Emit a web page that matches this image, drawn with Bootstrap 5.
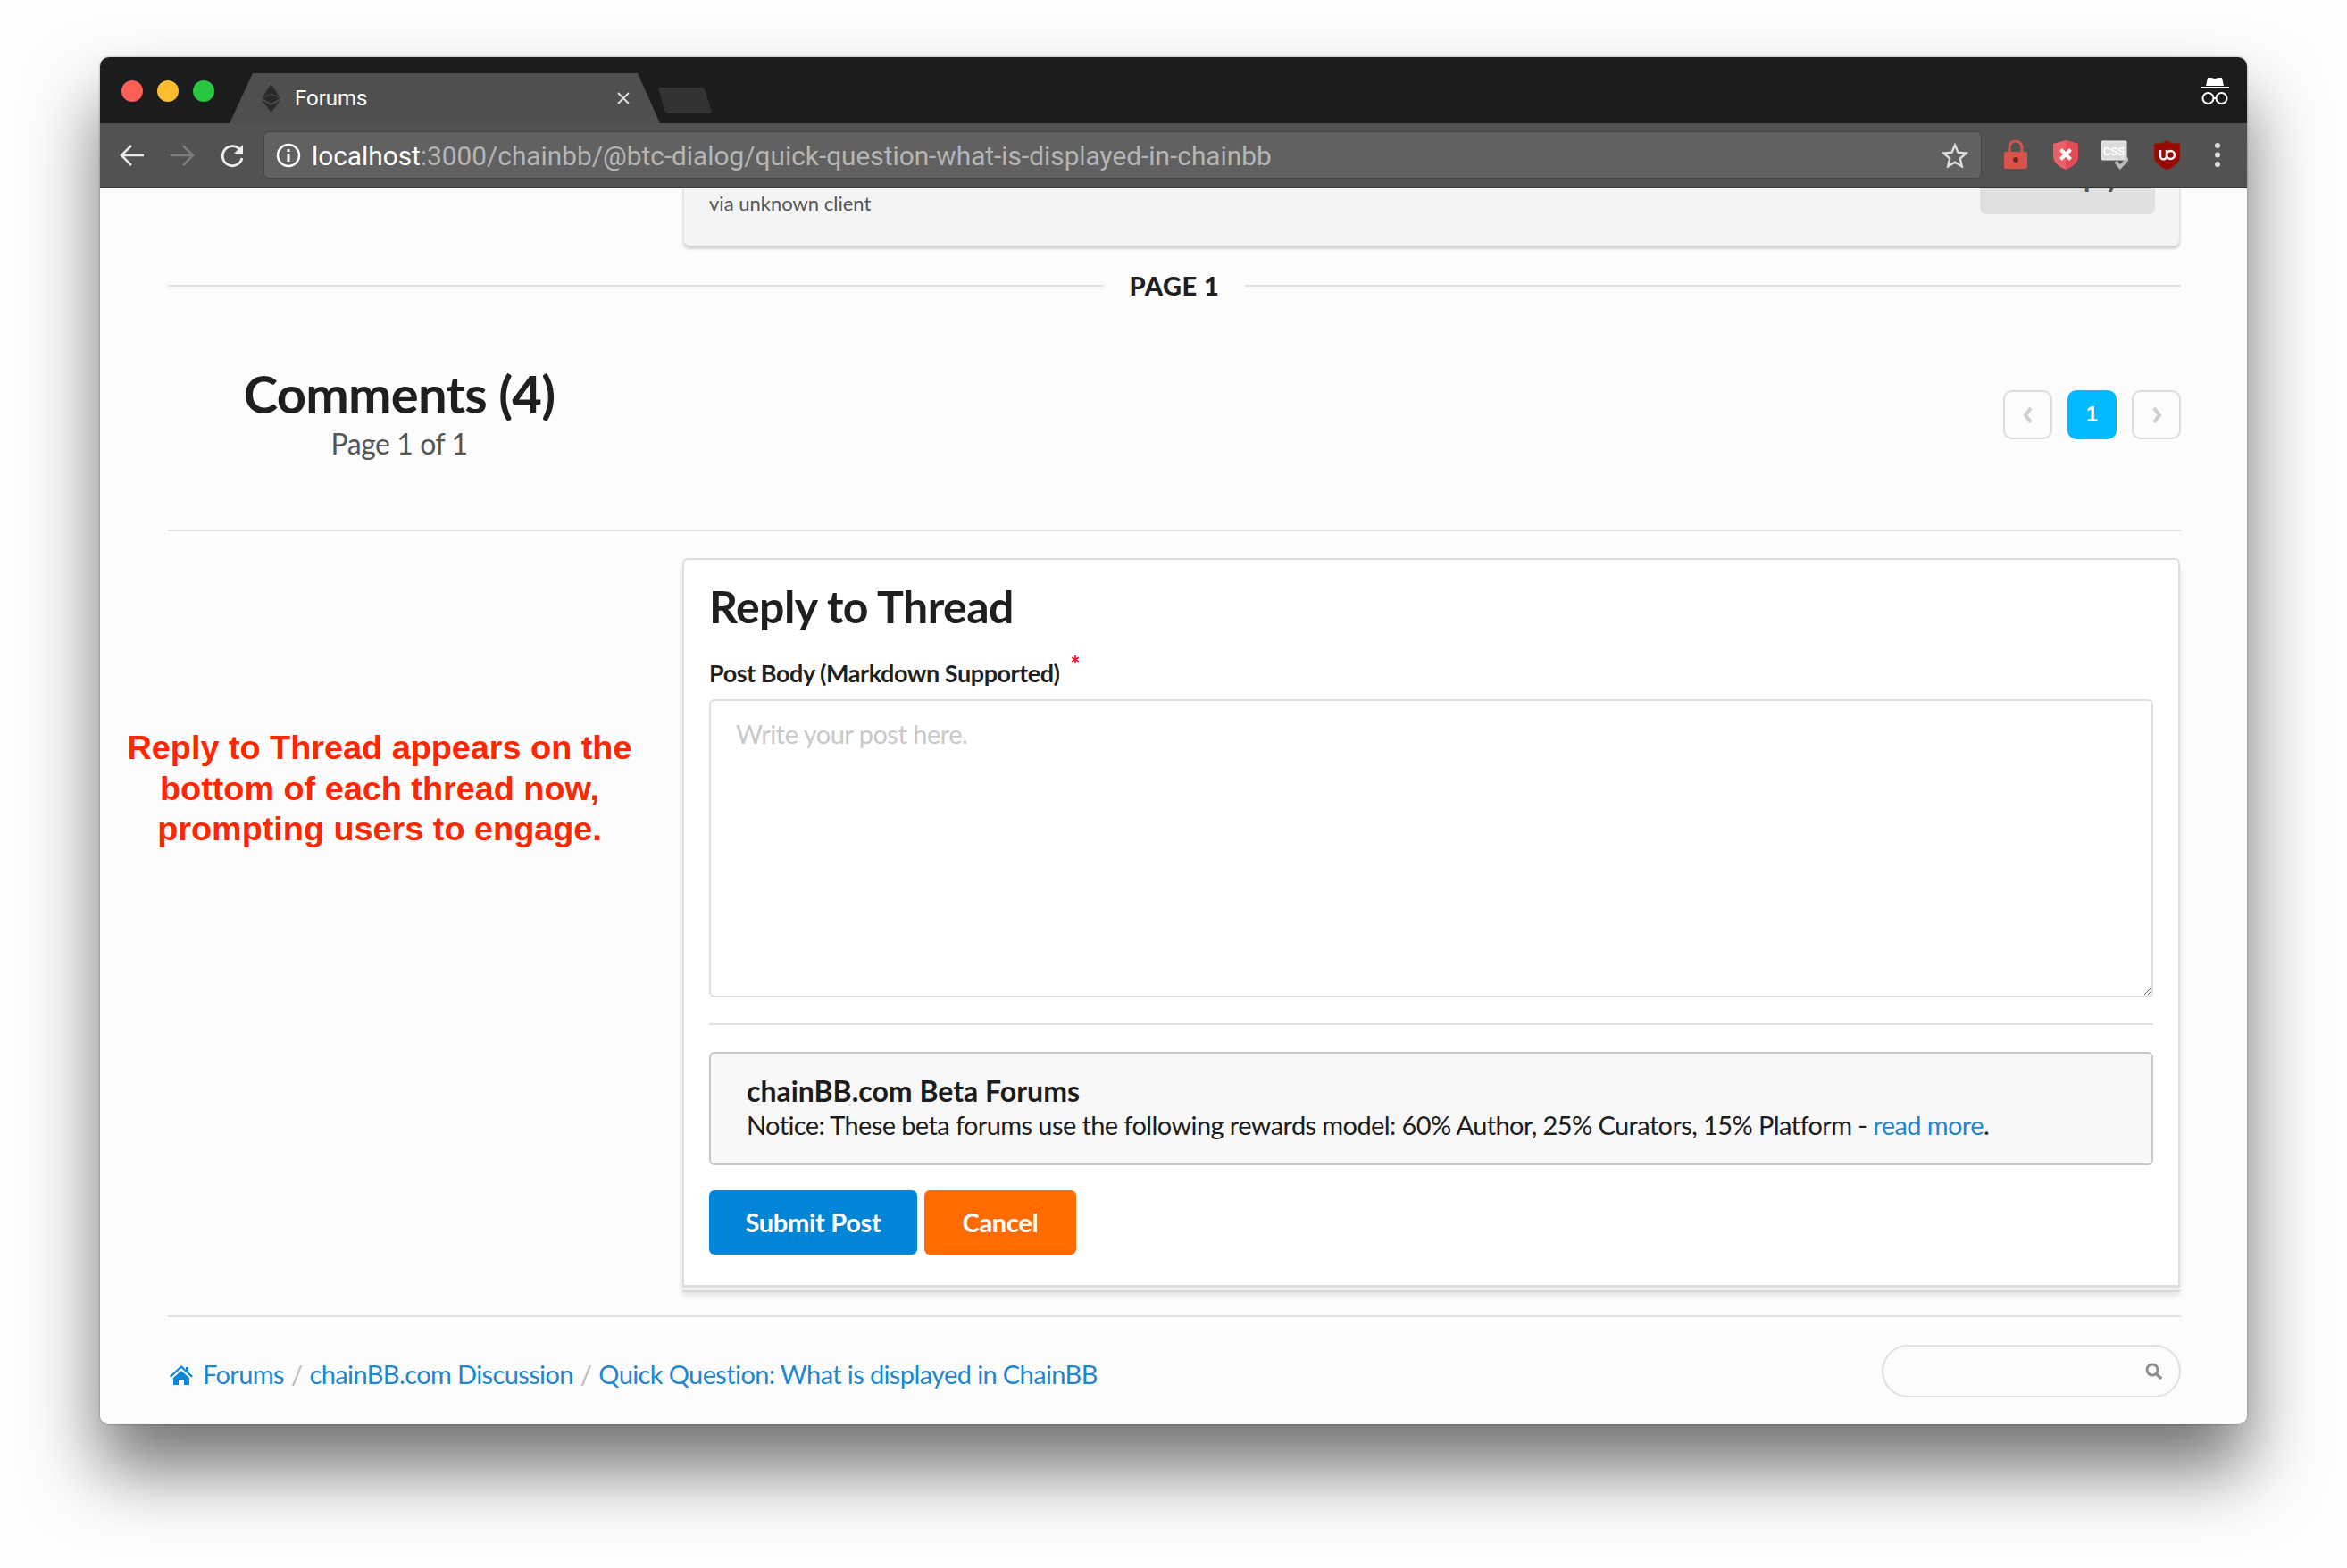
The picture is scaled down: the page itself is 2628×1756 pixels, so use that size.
<!DOCTYPE html>
<html lang="en">
  <head>
    <meta charset="UTF-8" />
    <meta name="viewport" content="width=device-width, initial-scale=1.0" />
    <title>Forums</title>
    <link href="https://cdn.jsdelivr.net/npm/bootstrap@5.3.3/dist/css/bootstrap.min.css" rel="stylesheet" />
    <style>
      body { background: #fdfdfd; font-family: Lato, "Liberation Sans", sans-serif; color: #1f1f1f; padding: 64px 0 0 112px; height: 1756px; overflow: hidden; }
      .win { width: 2404px; height: 1531px; border-radius: 10px; overflow: hidden; background: #fcfcfc; }
      .win-shadow { width: 2404px; border-radius: 10px; box-shadow: 0 50px 80px rgba(0,0,0,.55), 0 0 2px rgba(0,0,0,.5); }

      .tabstrip { height: 74px; background: #1b1c1e; }
      .lights { padding-left: 24px; gap: 16px; padding-top: 26px; height: 74px; }
      .light { width: 24px; height: 24px; border-radius: 50%; }
      .tab-shape { width: 482px; height: 56px; margin: 18px 0 0 17px; background: #4f4f4f; color: #fff; font-family: Roboto, sans-serif; font-size: 24px; clip-path: polygon(0 100%, 26px 0, 457px 0, 100% 100%); padding: 0 33px 0 36px; }
      .tab-new { width: 52px; height: 29px; margin: 34px 0 0 2px; background: #333; border-radius: 3px; transform: skewX(17deg); }
      .toolbar { height: 73px; background: #525252; border-bottom: 2px solid #333; padding-left: 22px; }
      .omni { position: relative; margin-left: 21px; width: 1924px; height: 53px; background: #616161; border: 1px solid #454545; border-radius: 6px; color: #b5b5b5; font-family: Roboto, sans-serif; font-size: 29.800px; padding: 0 14px 0 13px; }
      .omni b { color: #fff; font-weight: 400; }

      .page-body { height: 1384px; overflow: hidden; padding: 0 74px 0 76px; }
      .prev-post { height: 64px; margin-left: 576px; background: #f3f4f6; border-radius: 0 0 8px 8px; border: 2px solid #e6e6e6; border-width: 0 2px 0 2px; box-shadow: 0 5px 3px -1px #d4d4d4; padding: 4px 27px 0 28px; font-size: 22px; line-height: 26px; color: #555; }
      .prev-reply { width: 196px; height: 69px; margin-top: -44px; background: #dfe0e2; border-radius: 8px; color: #555; font-size: 30px; font-weight: 700; gap: 16px; padding-bottom: 29px; }
      .prev-reply i { width: 26px; height: 22px; background: #666; border-radius: 4px; }

      .rule-line { height: 2px; background: #e0e0e0; border: 0; margin: 0; opacity: 1; }
      .page-divider { height: 40px; margin-top: 25px; font-size: 29px; font-weight: 900; letter-spacing: .5px; gap: 29px; }
      .heading-row { height: 253px; }
      .heading-block { width: 518px; padding-top: 67px; }
      .heading-block h2 { font-size: 58px; line-height: 68px; font-weight: 700; letter-spacing: -.8px; margin: 0; color: #1f1f1f; }
      .heading-block div { font-size: 32px; line-height: 44px; letter-spacing: -.45px; color: #555; }
      .pager { gap: 17px; padding-top: 97px; }
      .pg-btn { width: 55px; height: 55px; border: 2px solid #dcdcdc; border-radius: 10px; color: #c9c9c9; font-size: 26px; }
      .pg-btn.on { background: #00b9ff; border-color: #00b9ff; color: #fff; font-family: "Liberation Sans", sans-serif; font-weight: 700; font-size: 23px; }

      .reply-row { margin-top: 30px; }
      .side-col { width: 576px; flex: none; }
      .side-note { width: 566px; margin: 190px 0 0 -46px; color: #ff2600; font-family: "Liberation Sans", sans-serif; font-weight: 700; font-size: 37.800px; line-height: 45.500px; text-align: center; white-space: nowrap; }
      .reply-box { width: 1677px; height: 817px; background: #fff; border: 2px solid #dedede; border-bottom-width: 3px; border-radius: 6px 6px 0 0; padding: 22px 28px 0 28px; box-shadow: 0 3px 0 #f6f6f6, 0 5px 0 #d8d8d8, 0 9px 6px rgba(0,0,0,.1); }
      .reply-box h3 { font-size: 50px; line-height: 60px; font-weight: 700; letter-spacing: -.55px; margin: 0 0 28px; color: #1f1f1f; }
      .reply-box .form-label { font-size: 27px; line-height: 34px; font-weight: 700; letter-spacing: -.45px; margin: 0 0 12px; display: block; }
      .req { color: #ff0020; font-size: 26px; position: relative; top: -10px; margin-left: 6px; }
      .reply-box .form-control { height: 334px; border: 2px solid #dedede; border-radius: 6px; padding: 15px 28px; font-family: Lato, sans-serif; font-size: 29px; letter-spacing: -.5px; background: #fff; }
      .reply-box .form-control::placeholder { color: #c8c8c8; }
      .form-rule { margin: 29px 0 30px; }
      .notice-box { height: 127px; background: #f8f8f8; border: 2px solid #c8c8c8; border-radius: 6px; padding: 23px 40px; font-size: 29px; line-height: 38px; letter-spacing: -.6px; color: #1c1c1c; }
      .notice-box strong { display: block; font-size: 32px; font-weight: 700; line-height: 38px; letter-spacing: 0; }
      .notice-box a, .crumbs a { color: #2185d0; text-decoration: none; }
      .form-btns { margin-top: 28px; gap: 8px; }
      .form-btns .btn { height: 72px; border: 0; border-radius: 6px; color: #fff; font-size: 29px; font-weight: 700; letter-spacing: -.3px; padding: 0; }
      .btn-submit { width: 233px; background: #0285d6; }
      .btn-quit { width: 170px; background: #ff6b00; }

      .foot-rule { margin-top: 31px; }
      .crumbs { margin: 0; font-size: 29px; line-height: 38px; letter-spacing: -.62px; padding-left: 1px; }
      .crumbs .breadcrumb-item + .breadcrumb-item { padding-left: 8px; }
      .crumbs .breadcrumb-item + .breadcrumb-item::before { color: #bbb; padding-right: 8px; }
      .home-icon { margin-right: 10px; vertical-align: -2px; }
      .search-pill { position: relative; width: 335px; height: 59px; margin-top: 31px; }
      .search-pill .form-control { height: 59px; border: 2px solid #e0e0e0; border-radius: 30px; background: #fcfcfc; }
      .search-pill svg { position: absolute; right: 20px; top: 20px; }
    </style>
  </head>
  <body>
    <div class="win-shadow">
      <div class="win d-flex flex-column">
        <div class="tabstrip d-flex">
          <div class="lights d-flex">
            <span class="light" style="background:#fd5f57"></span>
            <span class="light" style="background:#fdbb2e"></span>
            <span class="light" style="background:#27c83f"></span>
          </div>
          <div class="tab-shape d-flex align-items-center">
            <svg width="21" height="32" viewBox="0 0 21 32" class="flex-shrink-0 me-3"><path d="M10.5 0 21 16 10.5 22 0 16z" fill="#2a2a2a"/><path d="M0 18 10.5 24 21 18 10.5 32z" fill="#2a2a2a"/><path d="M0 16 10.5 11 21 16" fill="none" stroke="#4a4a4a" stroke-width="1"/></svg>
            <span>Forums</span>
            <svg width="16" height="16" viewBox="0 0 16 16" class="ms-auto"><path d="M2 2 14 14M14 2 2 14" stroke="#ddd" stroke-width="2"/></svg>
          </div>
          <div class="tab-new"></div>
          <svg width="32" height="32" viewBox="0 0 32 32" class="ms-auto" style="margin:22px 20px 0 0"><path d="M8 1h4l4 1 4-1h4l2 9H6z" fill="#fff"/><rect x="0" y="11" width="32" height="2" fill="#fff"/><circle cx="8.500" cy="24" r="6" fill="none" stroke="#fff" stroke-width="2"/><circle cx="23.500" cy="24" r="6" fill="none" stroke="#fff" stroke-width="2"/><path d="M14 24h4" stroke="#fff" stroke-width="2"/></svg>
        </div>

        <div class="toolbar d-flex align-items-center">
          <svg width="28" height="26" viewBox="0 0 28 26"><path d="M27 13H3M13 2 2 13l11 11" fill="none" stroke="#e8e8e8" stroke-width="2.500"/></svg>
          <svg width="28" height="26" viewBox="0 0 28 26" style="margin-left:28px"><path d="M1 13h24M15 2l11 11-11 11" fill="none" stroke="#7c7c7c" stroke-width="2.500"/></svg>
          <svg width="28" height="28" viewBox="0 0 28 28" style="margin-left:28px"><path d="M23 8a11 11 0 1 0 2 9" fill="none" stroke="#eee" stroke-width="2.800"/><path d="M26 2v10H16z" fill="#eee"/></svg>
          <div class="omni d-flex align-items-center">
            <svg width="28" height="28" viewBox="0 0 28 28" class="flex-shrink-0"><circle cx="14" cy="14" r="12" fill="none" stroke="#fff" stroke-width="2.500"/><rect x="12.500" y="7" width="3" height="3" fill="#fff"/><rect x="12.500" y="12" width="3" height="9" fill="#fff"/></svg>
            <span class="ms-2 ps-1 pt-1"><b>localhost</b>:3000/chainbb/@btc-dialog/quick-question-what-is-displayed-in-chainbb</span>
            <svg width="30" height="28" viewBox="0 0 30 28" class="ms-auto"><path d="M15 2.500 18.600 10.800 27.600 11.600 20.800 17.500 22.800 26.300 15 21.700 7.200 26.300 9.200 17.500 2.400 11.600 11.400 10.800z" fill="none" stroke="#ddd" stroke-width="2.400"/></svg>
          </div>
          <svg width="28" height="33" viewBox="0 0 28 33" style="margin-left:24px"><path d="M7 14V8a7 7 0 0 1 14 0v6" fill="none" stroke="#d9534a" stroke-width="3"/><rect x="1" y="13" width="26" height="19" rx="2" fill="#d9534a"/><circle cx="14" cy="22" r="3" fill="#6e2b26"/></svg>
          <svg width="28" height="33" viewBox="0 0 28 33" style="margin-left:28px"><path d="M14 0l14 4v14c0 7-7 12-14 15C7 30 0 25 0 18V4z" fill="#ec5f69"/><path d="M14 0l14 4v14c0 7-7 12-14 15z" fill="#e54b57"/><path d="M8.500 10.500 19.500 21.500M19.500 10.500 8.500 21.500" stroke="#fff" stroke-width="4"/></svg>
          <div class="d-flex" style="margin-left:25px;width:31px;height:33px"><svg width="31" height="33" viewBox="0 0 31 33"><rect x="1" y="1" width="28" height="21" rx="1" fill="#dcdcdc" stroke="#f0f0f0"/><text x="15" y="17" font-family="Liberation Sans, sans-serif" font-size="12" font-weight="700" fill="#fff" text-anchor="middle">CSS</text><path d="M17 24l5 6 9-10" fill="none" stroke="#bbb" stroke-width="4"/></svg></div>
          <svg width="29" height="33" viewBox="0 0 29 33" style="margin-left:29px"><path d="M14.500 0 19 3l10 1v14c0 7-7 12-14.500 15C7 30 0 25 0 18V4l10-1z" fill="#980a00" stroke="#7d2a24"/><path d="M7 11v7a3.500 3.500 0 0 0 7 0v-7" fill="none" stroke="#fff" stroke-width="2.500"/><circle cx="18.500" cy="16.500" r="4.500" fill="none" stroke="#fff" stroke-width="2.500"/></svg>
          <svg width="6" height="27" viewBox="0 0 6 27" style="margin-left:39px"><circle cx="3" cy="3" r="3" fill="#ddd"/><circle cx="3" cy="13.500" r="3" fill="#ddd"/><circle cx="3" cy="24" r="3" fill="#ddd"/></svg>
        </div>

        <div class="page-body">
          <div class="prev-post d-flex justify-content-between align-items-start">
            <span>via unknown client</span>
            <div class="prev-reply d-flex align-items-end justify-content-center"><i></i><span>Reply</span></div>
          </div>

          <div class="page-divider d-flex align-items-center">
            <hr class="rule-line flex-grow-1" />
            <span>PAGE 1</span>
            <hr class="rule-line flex-grow-1" />
          </div>

          <div class="heading-row d-flex justify-content-between">
            <div class="heading-block text-center">
              <h2>Comments (4)</h2>
              <div>Page 1 of 1</div>
            </div>
            <div class="pager d-flex align-items-start">
              <span class="pg-btn d-flex align-items-center justify-content-center"><svg width="12" height="20" viewBox="0 0 12 20"><path d="M9 2 3 10l6 8" fill="none" stroke="#cfcfcf" stroke-width="4"/></svg></span>
              <span class="pg-btn on d-flex align-items-center justify-content-center">1</span>
              <span class="pg-btn d-flex align-items-center justify-content-center"><svg width="12" height="20" viewBox="0 0 12 20"><path d="M3 2l6 8-6 8" fill="none" stroke="#cfcfcf" stroke-width="4"/></svg></span>
            </div>
          </div>

          <hr class="rule-line" />

          <div class="reply-row d-flex">
            <div class="side-col">
              <div class="side-note">Reply to Thread appears on the<br />bottom of each thread now,<br />prompting users to engage.</div>
            </div>
            <form class="reply-box">
              <h3>Reply to Thread</h3>
              <label class="form-label" for="postBody">Post Body (Markdown Supported) <span class="req">*</span></label>
              <textarea class="form-control" id="postBody" placeholder="Write your post here."></textarea>
              <hr class="rule-line form-rule" />
              <div class="notice-box">
                <strong>chainBB.com Beta Forums</strong>
                Notice: These beta forums use the following rewards model: 60% Author, 25% Curators, 15% Platform - <a href="#">read more</a>.
              </div>
              <div class="form-btns d-flex">
                <button type="button" class="btn btn-submit">Submit Post</button>
                <button type="button" class="btn btn-quit">Cancel</button>
              </div>
            </form>
          </div>

          <hr class="rule-line foot-rule" />

          <div class="d-flex justify-content-between">
            <nav style="margin-top:45px">
              <ol class="breadcrumb crumbs">
                <li class="breadcrumb-item"><a href="#"><svg width="28" height="24" viewBox="0 0 28 24" class="home-icon"><path d="M14 1 1 13l1.500 1.500L14 4l11.500 10.500L27 13l-5-4.500V3h-3v2.800z" fill="#0b87da"/><path d="M5 15 14 7l9 8v8h-6v-6h-6v6H5z" fill="#0b87da"/></svg>Forums</a></li>
                <li class="breadcrumb-item"><a href="#">chainBB.com Discussion</a></li>
                <li class="breadcrumb-item"><a href="#">Quick Question: What is displayed in ChainBB</a></li>
              </ol>
            </nav>
            <div class="search-pill">
              <input class="form-control" type="text" />
              <svg width="20" height="20" viewBox="0 0 20 20"><circle cx="8" cy="8" r="6" fill="none" stroke="#8c8c8c" stroke-width="3"/><path d="M12.500 12.500 18 18" stroke="#8c8c8c" stroke-width="3.500"/></svg>
            </div>
          </div>
        </div>
      </div>
    </div>
    <script src="https://cdn.jsdelivr.net/npm/bootstrap@5.3.3/dist/js/bootstrap.bundle.min.js"></script>
  </body>
</html>
